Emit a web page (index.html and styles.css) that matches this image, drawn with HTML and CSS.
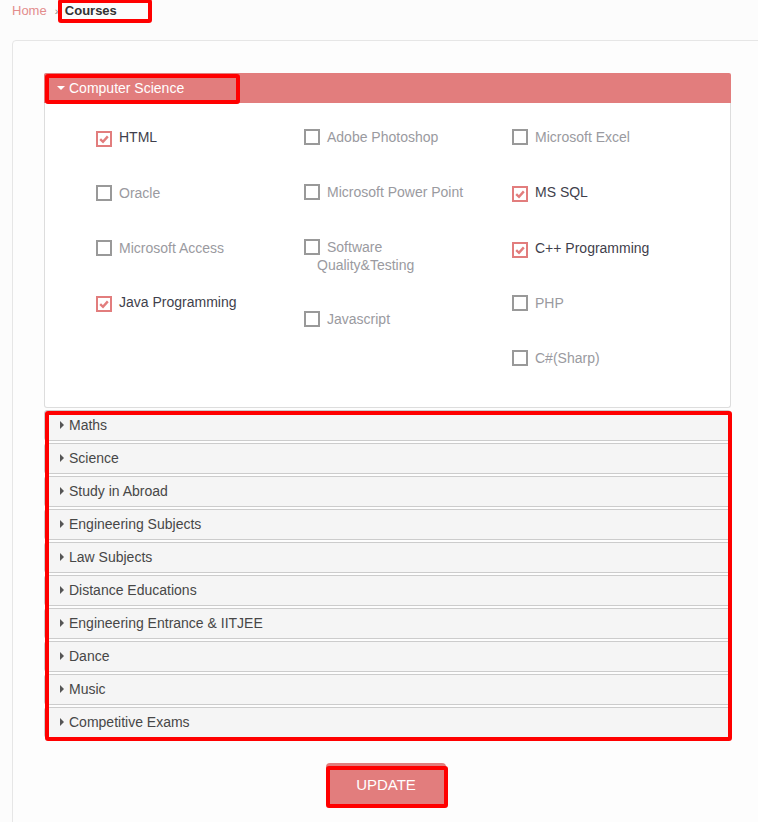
FILE: index.html
```html
<!DOCTYPE html>
<html lang="en">
<head>
<meta charset="utf-8">
<title>Courses</title>
<link rel="stylesheet" href="styles.css">
</head>
<body>
<nav class="crumbs"><a class="crumb-home" href="#">Home</a><span class="crumb-sep">»</span><span class="crumb-current">Courses</span></nav>

<div class="card">
  <section class="panel">
    <div class="panel-head"><span class="caret-down"></span>Computer Science</div>
    <div class="panel-body">
      <ul class="col">
        <li class="item checked"><span class="box"><svg viewBox="0 0 12 12" width="12" height="12"><path d="M2.2 6.2 L5 8.8 L9.8 3.4" fill="none" stroke="#e27d7d" stroke-width="2.4"/></svg></span>HTML</li>
        <li class="item"><span class="box"></span>Oracle</li>
        <li class="item"><span class="box"></span>Microsoft Access</li>
        <li class="item checked"><span class="box"><svg viewBox="0 0 12 12" width="12" height="12"><path d="M2.2 6.2 L5 8.8 L9.8 3.4" fill="none" stroke="#e27d7d" stroke-width="2.4"/></svg></span>Java Programming</li>
      </ul>
      <ul class="col">
        <li class="item"><span class="box"></span>Adobe Photoshop</li>
        <li class="item"><span class="box"></span>Microsoft Power Point</li>
        <li class="item"><span class="box"></span>Software Quality&amp;Testing</li>
        <li class="item"><span class="box"></span>Javascript</li>
      </ul>
      <ul class="col">
        <li class="item"><span class="box"></span>Microsoft Excel</li>
        <li class="item checked"><span class="box"><svg viewBox="0 0 12 12" width="12" height="12"><path d="M2.2 6.2 L5 8.8 L9.8 3.4" fill="none" stroke="#e27d7d" stroke-width="2.4"/></svg></span>MS SQL</li>
        <li class="item checked"><span class="box"><svg viewBox="0 0 12 12" width="12" height="12"><path d="M2.2 6.2 L5 8.8 L9.8 3.4" fill="none" stroke="#e27d7d" stroke-width="2.4"/></svg></span>C++ Programming</li>
        <li class="item"><span class="box"></span>PHP</li>
        <li class="item"><span class="box"></span>C#(Sharp)</li>
      </ul>
    </div>
  </section>

  <div class="acc-list">
    <div class="acc-item"><span class="caret-right"></span>Maths</div>
    <div class="acc-item"><span class="caret-right"></span>Science</div>
    <div class="acc-item"><span class="caret-right"></span>Study in Abroad</div>
    <div class="acc-item"><span class="caret-right"></span>Engineering Subjects</div>
    <div class="acc-item"><span class="caret-right"></span>Law Subjects</div>
    <div class="acc-item"><span class="caret-right"></span>Distance Educations</div>
    <div class="acc-item"><span class="caret-right"></span>Engineering Entrance &amp; IITJEE</div>
    <div class="acc-item"><span class="caret-right"></span>Dance</div>
    <div class="acc-item"><span class="caret-right"></span>Music</div>
    <div class="acc-item"><span class="caret-right"></span>Competitive Exams</div>
  </div>

  <div class="actions"><button class="btn-update" type="button">UPDATE</button></div>
</div>

<div class="mark mark-crumb"></div>
<div class="mark mark-head"></div>
<div class="mark mark-acc"></div>
<div class="mark mark-btn"></div>
</body>
</html>
```

FILE: styles.css
```css
html, body {
  margin: 0;
  padding: 0;
}
body {
  background: #fcfcfc;
  font-family: "Liberation Sans", Arial, sans-serif;
  font-size: 14px;
  color: #444;
  overflow: hidden;
  position: relative;
  height: 822px;
}

.crumbs {
  height: 20px;
  line-height: 22px;
  padding-left: 12px;
  font-size: 13px;
}
.crumb-home {
  color: #e38c8c;
  text-decoration: none;
}
.crumb-sep {
  color: #888;
  font-size: 11px;
  margin: 0 4px 0 8px;
}
.crumb-current {
  color: #333;
  font-weight: bold;
}

.card {
  margin: 20px -60px 0 12px;
  border: 1px solid #e6e6e6;
  border-radius: 4px;
  background: #fdfdfd;
  padding: 32px 0 60px 31px;
}

.panel {
  width: 687px;
}
.panel-head {
  height: 30px;
  line-height: 30px;
  background: #e27d7d;
  color: #fff;
  padding-left: 13px;
  border-radius: 2px 2px 0 0;
  display: flex;
  align-items: center;
}
.caret-down {
  width: 0;
  height: 0;
  border-left: 4px solid transparent;
  border-right: 4px solid transparent;
  border-top: 4px solid #fff;
  margin-right: 4px;
}
.panel-body {
  background: #fff;
  border: 1px solid #ddd;
  border-top: none;
  border-radius: 0 0 3px 3px;
  padding: 25px 0 3px 51px;
  display: flex;
}
.col {
  list-style: none;
  margin: 0;
  padding: 0;
  width: 208px;
}
.item {
  padding-left: 13px;
  line-height: 18px;
  margin-bottom: 36.75px;
  color: #9a9aa0;
  width: 150px;
}
.item.checked {
  color: #3f3f4c;
}
.box {
  display: inline-flex;
  align-items: center;
  justify-content: center;
  box-sizing: border-box;
  width: 16px;
  height: 16px;
  border: 2px solid #999;
  margin-left: -13px;
  margin-right: 7px;
  vertical-align: -3px;
  background: #fff;
}
.checked .box {
  border-color: #e27d7d;
}
.box svg {
  display: block;
}

.acc-list {
  width: 687px;
  margin-top: 2px;
}
.acc-item {
  box-sizing: border-box;
  height: 31px;
  margin-bottom: 2px;
  background: #f5f5f5;
  border: 1px solid #ccc;
  border-radius: 3px;
  padding-left: 15px;
  display: flex;
  align-items: center;
  color: #474747;
}
.caret-right {
  width: 0;
  height: 0;
  border-top: 4px solid transparent;
  border-bottom: 4px solid transparent;
  border-left: 4px solid #555;
  margin-right: 5px;
}

.actions {
  width: 687px;
  display: flex;
  justify-content: center;
  padding-right: 3px;
  box-sizing: border-box;
  margin-top: 25px;
}
.btn-update {
  width: 120px;
  height: 43px;
  border: none;
  border-radius: 4px;
  background: #e27d7d;
  color: #fff;
  font-family: "Liberation Sans", Arial, sans-serif;
  font-size: 15px;
  padding: 0;
}

.mark {
  position: absolute;
  border: 4px solid #ff0000;
  border-radius: 3px;
  box-sizing: border-box;
  pointer-events: none;
}
.mark-crumb {
  left: 58px;
  top: -1px;
  width: 94px;
  height: 24px;
}
.mark-head {
  left: 45px;
  top: 74px;
  width: 195px;
  height: 30px;
}
.mark-acc {
  left: 45px;
  top: 411px;
  width: 687px;
  height: 330px;
}
.mark-btn {
  left: 326px;
  top: 766px;
  width: 122px;
  height: 42px;
}
```
